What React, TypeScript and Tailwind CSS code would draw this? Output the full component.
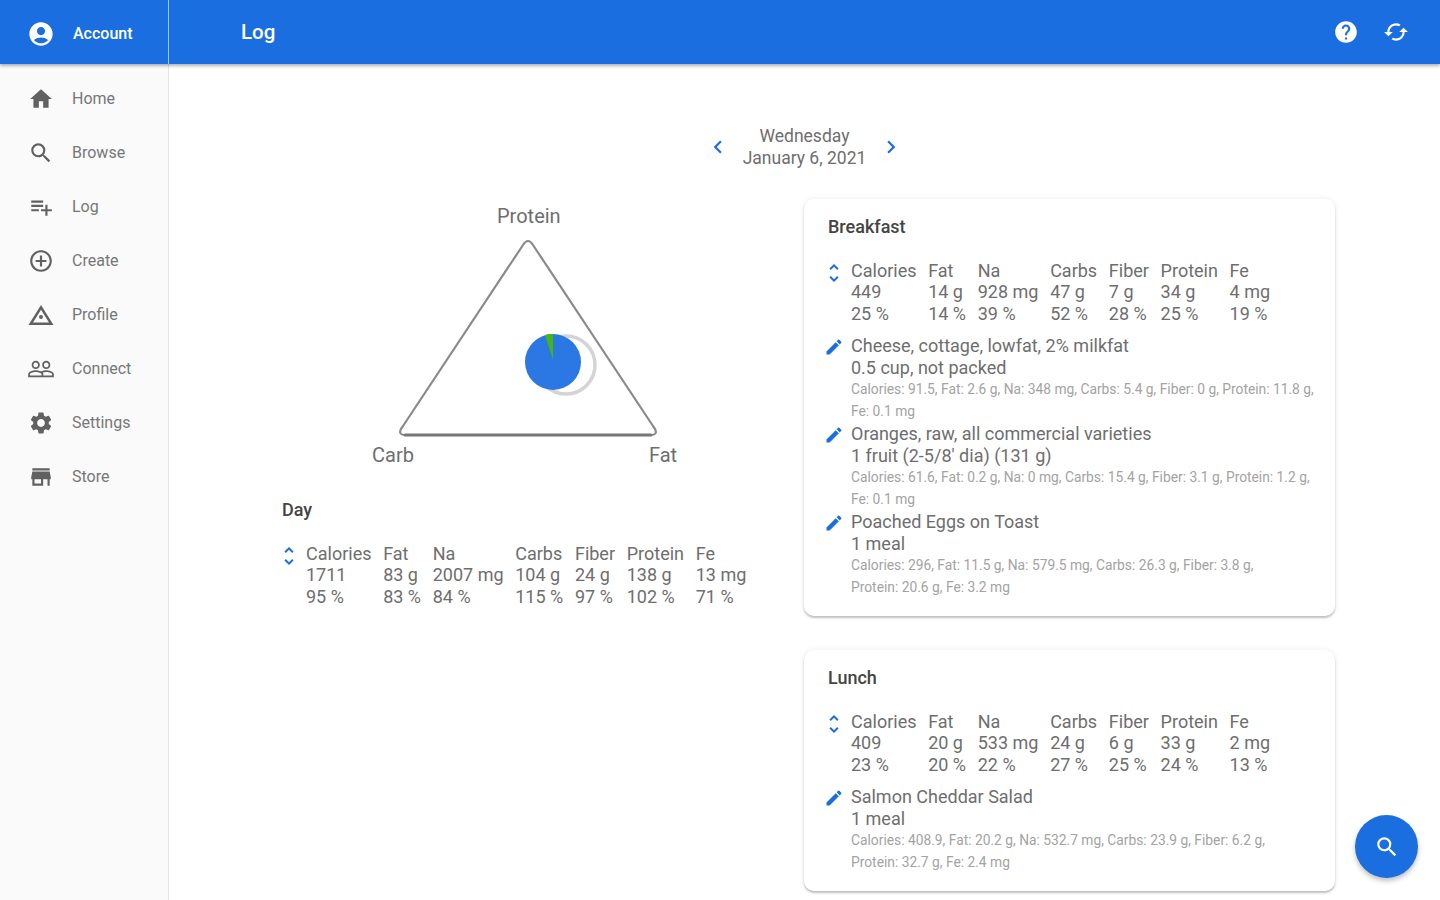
import { MdAccountCircle, MdAddCircleOutline, MdChangeHistory, MdChevronLeft, MdChevronRight, MdCreate, MdHelp, MdHome, MdPeopleOutline, MdPlaylistAdd, MdSearch, MdSettings, MdStore, MdSync, MdUnfoldMore } from "react-icons/md";
import type { ReactNode } from "react";

type Stat = { label: string; value: string; percent: string };
type Food = { name: string; amount: string; detail: string[] };

const navItems: { label: string; icon: ReactNode }[] = [
  { label: "Home", icon: <MdHome size={26} /> },
  { label: "Browse", icon: <MdSearch size={26} /> },
  { label: "Log", icon: <MdPlaylistAdd size={26} /> },
  { label: "Create", icon: <MdAddCircleOutline size={26} /> },
  {
    label: "Profile",
    icon: (
      <span className="relative flex">
        <MdChangeHistory size={30} />
        <span className="absolute left-[13px] top-[15px] h-1 w-1 rounded-full bg-[#616161]" />
      </span>
    ),
  },
  { label: "Connect", icon: <MdPeopleOutline size={28} /> },
  { label: "Settings", icon: <MdSettings size={26} /> },
  { label: "Store", icon: <MdStore size={26} /> },
];

const stats = (values: string[], percents: string[]): Stat[] =>
  ["Calories", "Fat", "Na", "Carbs", "Fiber", "Protein", "Fe"].map((label, i) => ({ label, value: values[i], percent: percents[i] }));

const dayStats = stats(
  ["1711", "83 g", "2007 mg", "104 g", "24 g", "138 g", "13 mg"],
  ["95 %", "83 %", "84 %", "115 %", "97 %", "102 %", "71 %"],
);

const breakfastStats = stats(
  ["449", "14 g", "928 mg", "47 g", "7 g", "34 g", "4 mg"],
  ["25 %", "14 %", "39 %", "52 %", "28 %", "25 %", "19 %"],
);

const lunchStats = stats(
  ["409", "20 g", "533 mg", "24 g", "6 g", "33 g", "2 mg"],
  ["23 %", "20 %", "22 %", "27 %", "25 %", "24 %", "13 %"],
);

const breakfastFoods: Food[] = [
  {
    name: "Cheese, cottage, lowfat, 2% milkfat",
    amount: "0.5 cup, not packed",
    detail: ["Calories: 91.5,", "Fat: 2.6 g,", "Na: 348 mg,", "Carbs: 5.4 g,", "Fiber: 0 g,", "Protein: 11.8 g,", "Fe: 0.1 mg"],
  },
  {
    name: "Oranges, raw, all commercial varieties",
    amount: "1 fruit (2-5/8' dia) (131 g)",
    detail: ["Calories: 61.6,", "Fat: 0.2 g,", "Na: 0 mg,", "Carbs: 15.4 g,", "Fiber: 3.1 g,", "Protein: 1.2 g,", "Fe: 0.1 mg"],
  },
  {
    name: "Poached Eggs on Toast",
    amount: "1 meal",
    detail: ["Calories: 296,", "Fat: 11.5 g,", "Na: 579.5 mg,", "Carbs: 26.3 g,", "Fiber: 3.8 g,", "Protein: 20.6 g,", "Fe: 3.2 mg"],
  },
];

const lunchFoods: Food[] = [
  {
    name: "Salmon Cheddar Salad",
    amount: "1 meal",
    detail: ["Calories: 408.9,", "Fat: 20.2 g,", "Na: 532.7 mg,", "Carbs: 23.9 g,", "Fiber: 6.2 g,", "Protein: 32.7 g,", "Fe: 2.4 mg"],
  },
];

const StatsTable = ({ data }: { data: Stat[] }) => (
  <div className="flex text-[18px] leading-[21.5px] text-[#6e6e6e]">
    <span className="w-[23px] shrink-0">
      <MdUnfoldMore size={24} className="-ml-[6px] mt-[1px] text-[#1a6ee0]" />
    </span>
    <div className="grid w-max grid-flow-col grid-rows-3 gap-x-[11.7px]">
      {data.map((s) => [
        <span key={s.label}>{s.label}</span>,
        <span key={s.label + "v"}>{s.value}</span>,
        <span key={s.label + "p"}>{s.percent}</span>,
      ])}
    </div>
  </div>
);

const FoodRow = ({ food }: { food: Food }) => (
  <div className="flex pb-px">
    <span className="w-[23px] shrink-0">
      <MdCreate size={20} className="-ml-[4px] mt-[2px] text-[#1a6ee0]" />
    </span>
    <div>
      <p className="text-[18px] leading-[21.5px] text-[#6e6e6e]">{food.name}</p>
      <p className="text-[18px] leading-[21.5px] text-[#6e6e6e]">{food.amount}</p>
      <p className="text-[13.8px] leading-[22px] text-[#a3a3a3]">
        {food.detail.map((d) => (
          <span key={d}>
            <span className="whitespace-nowrap">{d}</span>{" "}
          </span>
        ))}
      </p>
    </div>
  </div>
);

const MealCard = ({ title, data, foods }: { title: string; data: Stat[]; foods: Food[] }) => (
  <section className="w-[531px] rounded-[10px] bg-white pb-[17px] pl-6 pr-[18px] pt-[17px] shadow-[0_2px_2px_rgba(0,0,0,0.22),0_0_6px_rgba(0,0,0,0.08)]">
    <h2 className="text-[18px] font-medium leading-[21.5px] text-[#444]">{title}</h2>
    <div className="mt-[22px]">
      <StatsTable data={data} />
    </div>
    <div className="mt-[11px]">
      {foods.map((f) => (
        <FoodRow key={f.name} food={f} />
      ))}
    </div>
  </section>
);

const MacroChart = () => (
  <div className="relative h-[276px] w-[522px] text-[20px] leading-[22px] text-[#6e6e6e]">
    <span className="absolute left-[215px] top-[6px]">Protein</span>
    <span className="absolute left-[90px] top-[245px]">Carb</span>
    <span className="absolute left-[367px] top-[245px]">Fat</span>
    <svg className="absolute left-[110px] top-[35px]" width="270" height="206" viewBox="0 0 270 206">
      <path d="M131 11 Q136 3 141 11 L261 192 Q268 201 258 201 H14 Q4 201 11 192 Z" fill="#fff" stroke="#8a8a8a" strokeWidth="2.2" strokeLinejoin="round" />
      <path d="M13 201 H259" stroke="#777" strokeWidth="3" strokeLinecap="round" />
      <circle cx="174" cy="131" r="29" fill="#fff" stroke="#d4d4d4" strokeWidth="3.5" />
      <circle cx="161" cy="128" r="28" fill="#2b78e4" />
      <path d="M161 126 L153 101 A28 28 0 0 1 161 100 Z" fill="#45b518" />
    </svg>
  </div>
);

export default function App() {
  return (
    <div className="relative flex h-screen flex-col overflow-hidden bg-white font-['Roboto',sans-serif]">
      <header className="z-10 flex h-16 shrink-0 items-center bg-[#1a6ee0] text-white shadow-[0_2px_3px_rgba(0,0,0,0.3)]">
        <div className="flex h-full w-[169px] shrink-0 items-center border-r border-[#9fc3f2] pl-[27px] pt-[3px]">
          <MdAccountCircle size={28} />
          <span className="ml-[18px] text-[16px] font-medium">Account</span>
        </div>
        <h1 className="ml-[72px] text-[20.5px] font-medium">Log</h1>
        <div className="ml-auto flex items-center gap-6 pr-[31px]">
          <MdHelp size={26} />
          <MdSync size={26} className="rotate-90" />
        </div>
      </header>
      <div className="flex min-h-0 flex-1">
        <aside className="w-[169px] shrink-0 border-r border-[#e4e4e4] bg-[#fafafa] pt-[8px]">
          {navItems.map((item) => (
            <div key={item.label} className="flex h-[54px] items-center text-[#616161]">
              <span className="flex w-[72px] justify-center pl-[10px]">{item.icon}</span>
              <span className="text-[16px] text-[#777]">{item.label}</span>
            </div>
          ))}
        </aside>
        <main className="min-w-0 flex-1 overflow-hidden pt-[61px]">
          <div className="flex items-center justify-center gap-[12px] text-[#6e6e6e]">
            <MdChevronLeft size={26} className="text-[#1a6ee0]" />
            <p className="pt-px text-center text-[17.5px] leading-[21.5px]">
              Wednesday
              <br />
              January 6, 2021
            </p>
            <MdChevronRight size={26} className="text-[#1a6ee0]" />
          </div>
          <div className="mt-[30px] flex pl-[113px]">
            <div className="w-[522px]">
              <MacroChart />
              <h2 className="mt-[24px] text-[18px] font-medium leading-[21.5px] text-[#444]">Day</h2>
              <div className="ml-[1px] mt-[22px]">
                <StatsTable data={dayStats} />
              </div>
            </div>
            <div className="flex flex-col gap-[34px]">
              <MealCard title="Breakfast" data={breakfastStats} foods={breakfastFoods} />
              <MealCard title="Lunch" data={lunchStats} foods={lunchFoods} />
            </div>
          </div>
        </main>
      </div>
      <button className="absolute left-[1355px] top-[815px] flex h-[63px] w-[63px] items-center justify-center rounded-full bg-[#1a6ee0] text-white shadow-[0_3px_5px_rgba(0,0,0,0.25)]">
        <MdSearch size={26} />
      </button>
    </div>
  );
}
